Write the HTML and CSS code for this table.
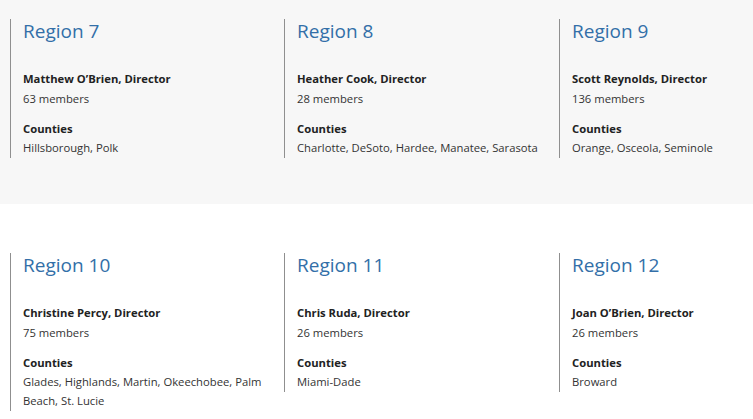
FILE: index.html
```html
<!DOCTYPE html>
<html>
<head>
<meta charset="utf-8">
<link rel="stylesheet" href="styles.css">
</head>
<body>
<section class="band band-gray">
  <div class="grid">
    <div class="region">
      <h3 class="region-title">Region 7</h3>
      <p class="director">Matthew O’Brien, Director</p>
      <p class="members">63 members</p>
      <p class="label">Counties</p>
      <p class="counties">Hillsborough, Polk</p>
    </div>
    <div class="region">
      <h3 class="region-title">Region 8</h3>
      <p class="director">Heather Cook, Director</p>
      <p class="members">28 members</p>
      <p class="label">Counties</p>
      <p class="counties">Charlotte, DeSoto, Hardee, Manatee, Sarasota</p>
    </div>
    <div class="region">
      <h3 class="region-title">Region 9</h3>
      <p class="director">Scott Reynolds, Director</p>
      <p class="members">136 members</p>
      <p class="label">Counties</p>
      <p class="counties">Orange, Osceola, Seminole</p>
    </div>
  </div>
</section>
<section class="band band-white">
  <div class="grid">
    <div class="region">
      <h3 class="region-title">Region 10</h3>
      <p class="director">Christine Percy, Director</p>
      <p class="members">75 members</p>
      <p class="label">Counties</p>
      <p class="counties">Glades, Highlands, Martin, Okeechobee, Palm Beach, St. Lucie</p>
    </div>
    <div class="region">
      <h3 class="region-title">Region 11</h3>
      <p class="director">Chris Ruda, Director</p>
      <p class="members">26 members</p>
      <p class="label">Counties</p>
      <p class="counties">Miami-Dade</p>
    </div>
    <div class="region">
      <h3 class="region-title">Region 12</h3>
      <p class="director">Joan O’Brien, Director</p>
      <p class="members">26 members</p>
      <p class="label">Counties</p>
      <p class="counties">Broward</p>
    </div>
  </div>
</section>
</body>
</html>
```
FILE: styles.css
```css
html, body {
  margin: 0;
  padding: 0;
}
body {
  font-family: "Open Sans", "Liberation Sans", sans-serif;
  color: #333333;
  background: #ffffff;
}
.band-gray {
  background: #f7f7f7;
  padding: 19px 0 46px;
}
.band-white {
  background: #ffffff;
  padding: 49px 0 10px;
}
.grid {
  display: grid;
  grid-template-columns: 274px 275px 194px;
  padding-left: 10px;
  align-items: start;
}
.region {
  border-left: 1px solid #8f8f8f;
  padding-left: 12px;
  padding-bottom: 1px;
}
.region-title {
  margin: 0 0 25px;
  font-size: 19px;
  font-weight: 400;
  line-height: 24px;
  color: #336fa8;
}
.region p {
  margin: 0;
  font-size: 11.25px;
}
.director {
  font-weight: 700;
  color: #222222;
  line-height: 21px;
}
.members {
  line-height: 19px;
}
.label {
  font-weight: 700;
  color: #222222;
  line-height: 19px;
  margin-top: 11px !important;
}
.counties {
  line-height: 19px;
}
```
